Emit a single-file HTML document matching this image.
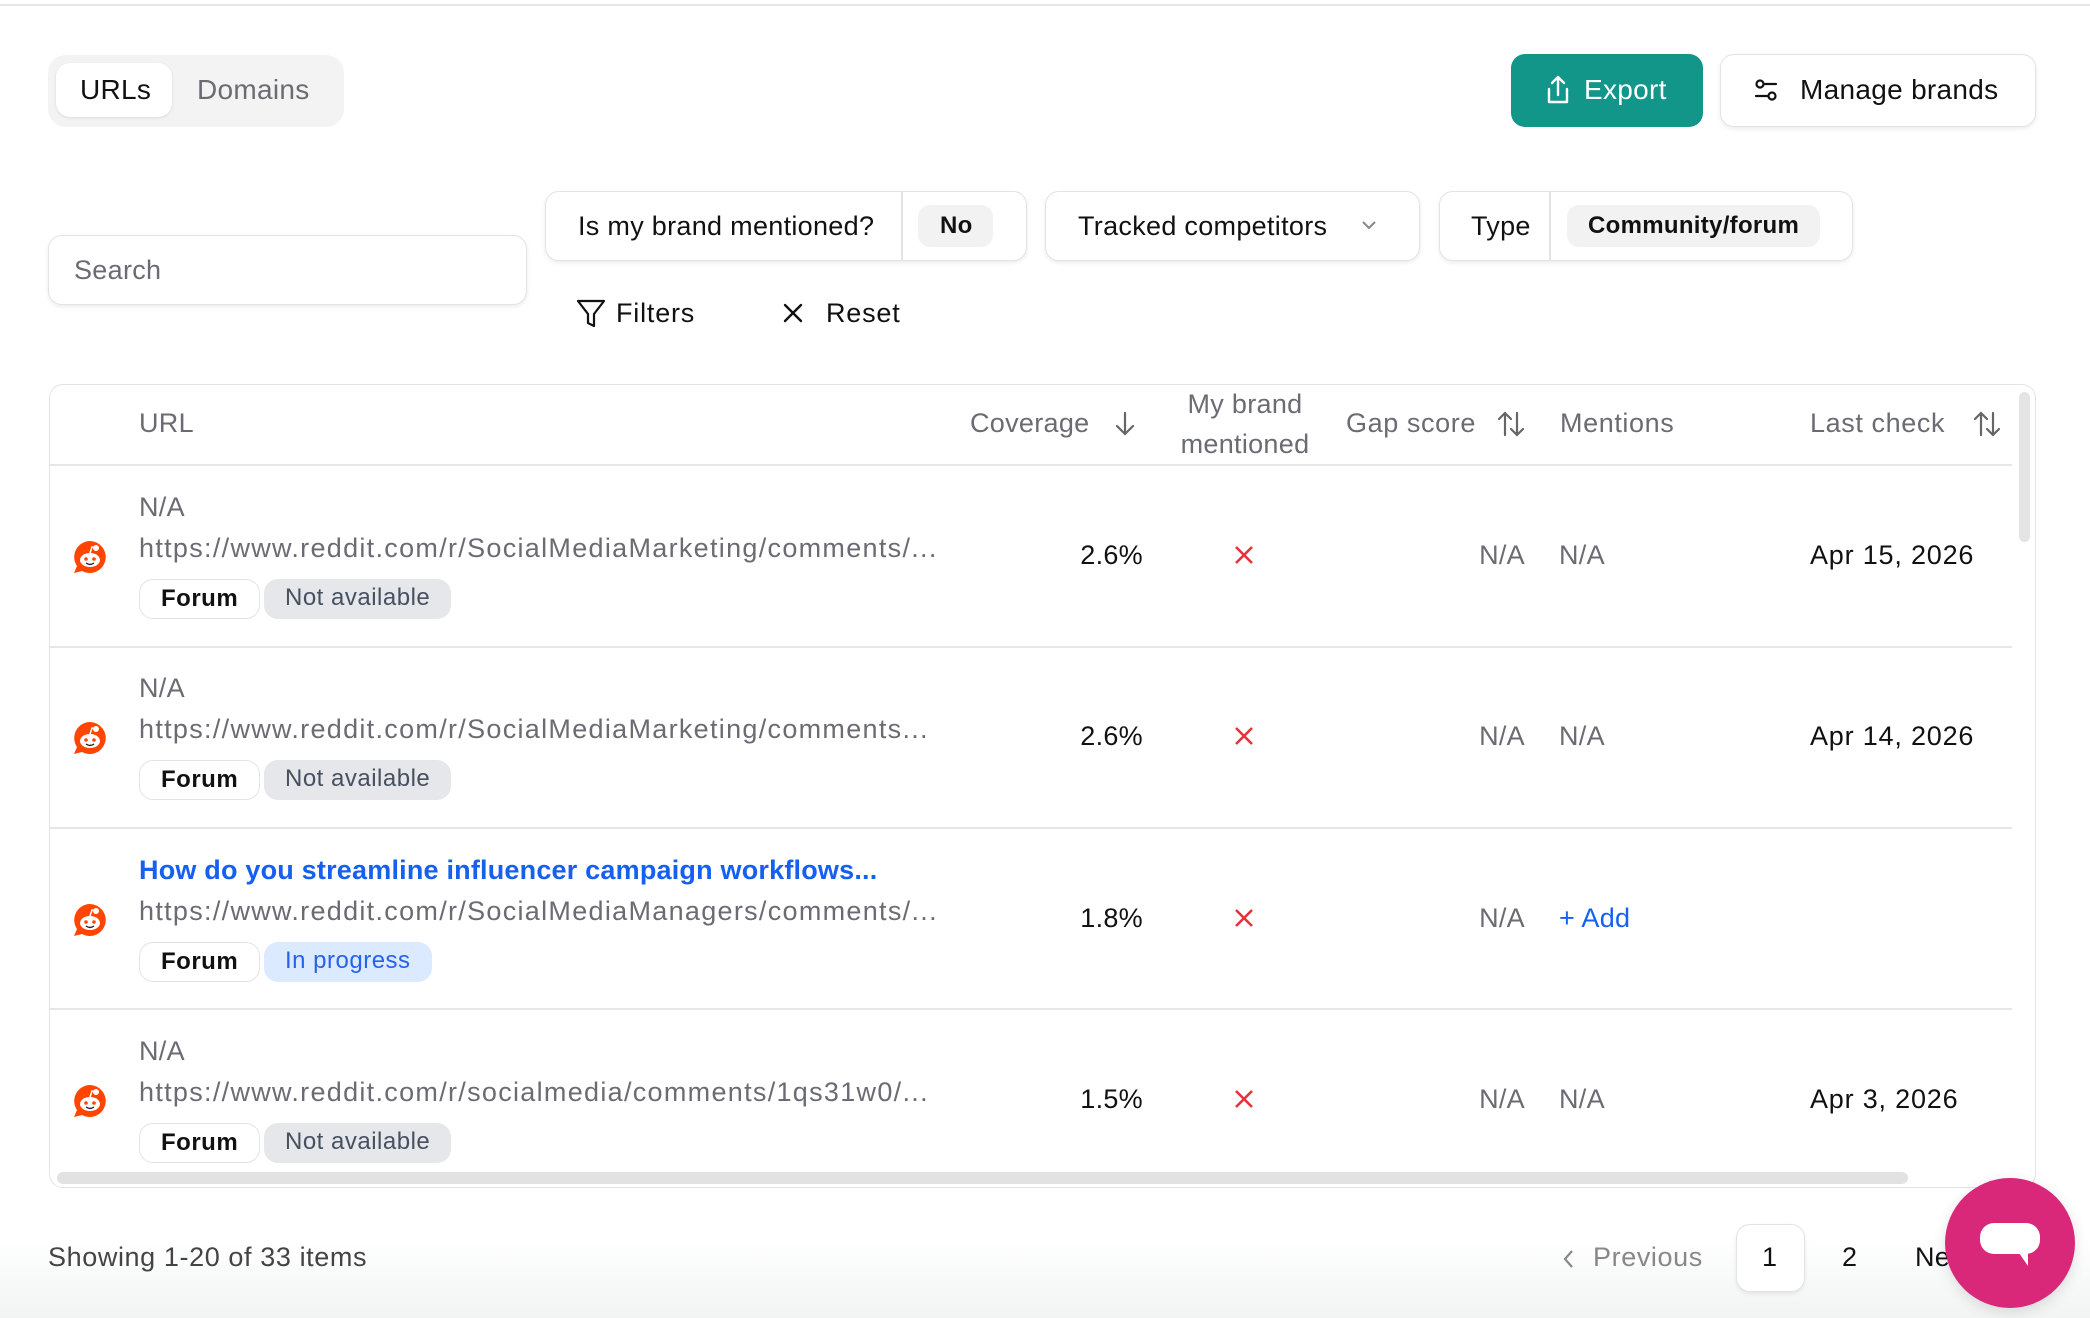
<!DOCTYPE html>
<html><head><meta charset="utf-8">
<style>
*{box-sizing:border-box;margin:0;padding:0}
body{width:2090px;height:1318px;background:#fff;font-family:"Liberation Sans",sans-serif;color:#111;position:relative;overflow:hidden}
.a{position:absolute}
.t{position:absolute;white-space:nowrap;line-height:1;letter-spacing:0.3px}
.btn{position:absolute;border:1.5px solid #e3e3e3;border-radius:14px;background:#fff;box-shadow:0 2px 4px rgba(0,0,0,.08)}
.tag{position:absolute;height:40px;border-radius:14px;font-size:24px;line-height:37px;padding:0 21px;white-space:nowrap;letter-spacing:0.5px}
.forum{border:1.5px solid #e3e3e3;background:#fff;color:#111;font-weight:bold}
.na{background:#e5e7eb;color:#475060}
.ip{background:#dbeafe;color:#2563eb}
.g{color:#6b6b73}
.x{color:#e8323c}
</style></head><body>
<div class="a" style="left:0;top:4px;width:2090px;height:2px;background:#e6e6e6"></div>

<div class="a" style="left:48px;top:55px;width:296px;height:72px;background:#f3f3f3;border-radius:18px"></div>
<div class="a" style="left:56px;top:63px;width:116px;height:54px;background:#fff;border-radius:14px;box-shadow:0 1px 3px rgba(0,0,0,.1)"></div>
<div class="t" style="left:80px;top:76px;font-size:28px;color:#111">URLs</div>
<div class="t" style="left:197px;top:76px;font-size:28px;color:#6b6b73">Domains</div>

<div class="a" style="left:1511px;top:54px;width:192px;height:73px;background:#12968a;border-radius:14px"></div>
<svg class="a" style="left:1544px;top:74px" width="28" height="32" viewBox="0 0 28 32" fill="none" stroke="#fff" stroke-width="2.4" stroke-linecap="round" stroke-linejoin="round"><path d="M14 3v18M8 9l6-6 6 6M5 15v13h18V15"/></svg>
<div class="t" style="left:1584px;top:76px;font-size:28px;color:#fff;font-weight:500">Export</div>
<div class="btn" style="left:1720px;top:54px;width:316px;height:73px"></div>
<svg class="a" style="left:1752px;top:76px" width="28" height="28" viewBox="0 0 28 28" fill="none" stroke="#111" stroke-width="2.2" stroke-linecap="round"><circle cx="8" cy="8" r="3.5"/><path d="M12 8h12M4 20h12"/><circle cx="20" cy="20" r="3.5"/></svg>
<div class="t" style="left:1800px;top:76px;font-size:28px">Manage brands</div>

<div class="btn" style="left:48px;top:235px;width:479px;height:70px"></div>
<div class="t" style="left:74px;top:257px;font-size:27px;color:#6b6b73">Search</div>

<div class="btn" style="left:545px;top:191px;width:482px;height:70px"></div>
<div class="t" style="left:578px;top:213px;font-size:27px">Is my brand mentioned?</div>
<div class="a" style="left:901px;top:192px;width:1.5px;height:68px;background:#e3e3e3"></div>
<div class="a" style="left:918px;top:205px;width:75px;height:42px;background:#f2f2f2;border-radius:12px"></div>
<div class="t" style="left:940px;top:214px;font-size:24px;font-weight:bold">No</div>

<div class="btn" style="left:1045px;top:191px;width:375px;height:70px"></div>
<div class="t" style="left:1078px;top:213px;font-size:27px">Tracked competitors</div>
<svg class="a" style="left:1360px;top:218px" width="18" height="14" viewBox="0 0 18 14" fill="none" stroke="#888" stroke-width="2"><path d="M3 4l6 6 6-6"/></svg>

<div class="btn" style="left:1439px;top:191px;width:414px;height:70px"></div>
<div class="t" style="left:1471px;top:213px;font-size:27px">Type</div>
<div class="a" style="left:1549px;top:192px;width:1.5px;height:68px;background:#e3e3e3"></div>
<div class="a" style="left:1567px;top:205px;width:253px;height:42px;background:#f2f2f2;border-radius:12px"></div>
<div class="t" style="left:1588px;top:214px;font-size:24px;font-weight:bold">Community/forum</div>

<svg class="a" style="left:576px;top:298px" width="30" height="32" viewBox="0 0 30 32" fill="none" stroke="#111" stroke-width="2.2" stroke-linejoin="round"><path d="M2 3h26L18 16v12l-6-3V16z"/></svg>
<div class="t" style="left:616px;top:300px;font-size:27px;letter-spacing:0.8px">Filters</div>
<svg class="a" style="left:782px;top:302px" width="22" height="22" viewBox="0 0 22 22" stroke="#111" stroke-width="2.4" stroke-linecap="round"><path d="M3 3l16 16M19 3L3 19"/></svg>
<div class="t" style="left:826px;top:300px;font-size:27px;letter-spacing:0.8px">Reset</div>

<div class="a" style="left:49px;top:384px;width:1987px;height:804px;border:1.5px solid #e3e3e3;border-radius:14px;overflow:hidden"></div>
<div class="a" style="left:50px;top:464px;width:1962px;height:2px;background:#e6e6e6"></div>
<div class="a" style="left:50px;top:646px;width:1962px;height:1.5px;background:#e6e6e6"></div>
<div class="a" style="left:50px;top:827px;width:1962px;height:1.5px;background:#e6e6e6"></div>
<div class="a" style="left:50px;top:1008px;width:1962px;height:1.5px;background:#e6e6e6"></div>
<div class="a" style="left:2019px;top:392px;width:11px;height:150px;background:#e4e4e4;border-radius:6px"></div>
<div class="a" style="left:57px;top:1172px;width:1851px;height:12px;background:#e2e2e2;border-radius:6px"></div>

<div class="t g" style="left:139px;top:410px;font-size:27px">URL</div>
<div class="t g" style="left:970px;top:410px;font-size:27px">Coverage</div>
<svg class="a" style="left:1114px;top:410px" width="22" height="28" viewBox="0 0 22 28" fill="none" stroke="#666" stroke-width="2.2" stroke-linecap="round"><path d="M11 3v21M3 16l8 8 8-8"/></svg>
<div class="t g" style="left:1170px;top:384px;font-size:27px;text-align:center;width:150px;line-height:40px;white-space:normal">My brand mentioned</div>
<div class="t g" style="left:1346px;top:410px;font-size:27px;letter-spacing:0.6px">Gap score</div>
<svg class="a" style="left:1496px;top:409px" width="30" height="30" viewBox="0 0 30 30" fill="none" stroke="#666" stroke-width="2.2" stroke-linecap="round"><path d="M9 26V4M3 10l6-6 6 6M21 4v22M15 20l6 6 6-6"/></svg>
<div class="t g" style="left:1560px;top:410px;font-size:27px;letter-spacing:0.6px">Mentions</div>
<div class="t g" style="left:1810px;top:410px;font-size:27px;letter-spacing:0.6px">Last check</div>
<svg class="a" style="left:1972px;top:409px" width="30" height="30" viewBox="0 0 30 30" fill="none" stroke="#666" stroke-width="2.2" stroke-linecap="round"><path d="M9 26V4M3 10l6-6 6 6M21 4v22M15 20l6 6 6-6"/></svg>

<div id="rows"></div>
<script>
var rows=[
{t:"N/A",u:"https://www.reddit.com/r/SocialMediaMarketing/comments/...",c:"2.6%",s:"na",m:"N/A",d:"Apr 15, 2026"},
{t:"N/A",u:"https://www.reddit.com/r/SocialMediaMarketing/comments...",c:"2.6%",s:"na",m:"N/A",d:"Apr 14, 2026"},
{t:"How do you streamline influencer campaign workflows...",u:"https://www.reddit.com/r/SocialMediaManagers/comments/...",c:"1.8%",s:"ip",m:"+ Add",d:""},
{t:"N/A",u:"https://www.reddit.com/r/socialmedia/comments/1qs31w0/...",c:"1.5%",s:"na",m:"N/A",d:"Apr 3, 2026"}];
var h="";
rows.forEach(function(r,i){var y=465+i*181.3;
var blue=r.t!="N/A";
h+='<svg class="a" style="left:72px;top:'+(y+74)+'px" width="36" height="36" viewBox="0 0 36 36"><path d="M18 2a16 16 0 1 1 -8 30L2 34l3-7A16 16 0 0 1 18 2z" fill="#ff4500"/><ellipse cx="18" cy="21" rx="10" ry="7" fill="#fff"/><circle cx="14" cy="20" r="1.8" fill="#ff4500"/><circle cx="22" cy="20" r="1.8" fill="#ff4500"/><path d="M14 24q4 3 8 0" stroke="#222" stroke-width="1.4" fill="none"/><circle cx="24" cy="9" r="3" fill="#fff"/><path d="M18 14l2-6 4 1" stroke="#fff" stroke-width="1.5" fill="none"/></svg>';
h+='<div class="t" style="left:139px;top:'+(y+29)+'px;font-size:27px;'+(blue?'color:#1560f0;font-weight:bold;letter-spacing:0.2px':'color:#6b6b73')+'">'+r.t+'</div>';
h+='<div class="t g" style="left:139px;top:'+(y+70)+'px;font-size:27px;letter-spacing:1.3px">'+r.u+'</div>';
h+='<div class="tag forum" style="left:139px;top:'+(y+114)+'px">Forum</div>';
h+='<div class="tag '+r.s+'" style="left:264px;top:'+(y+114)+'px">'+(r.s=="na"?"Not available":"In progress")+'</div>';
h+='<div class="t" style="left:1000px;width:143px;text-align:right;top:'+(y+77)+'px;font-size:27px">'+r.c+'</div>';
h+='<svg class="a" style="left:1234px;top:'+(y+80)+'px" width="20" height="20" viewBox="0 0 20 20" stroke="#e8323c" stroke-width="2.6"><path d="M2 2l16 16M18 2L2 18"/></svg>';
h+='<div class="t g" style="left:1400px;width:125px;text-align:right;top:'+(y+77)+'px;font-size:27px">N/A</div>';
h+='<div class="t" style="left:1559px;top:'+(y+77)+'px;font-size:27px;color:'+(r.m=="N/A"?"#6b6b73":"#1560f0")+'">'+r.m+'</div>';
h+='<div class="t" style="left:1810px;top:'+(y+77)+'px;font-size:27px;letter-spacing:0.8px">'+r.d+'</div>';
});
document.getElementById("rows").outerHTML=h;
</script>
<div class="a" style="left:0;top:1188px;width:2090px;height:130px;background:linear-gradient(#fff 40%,#f2f3f3)"></div>

<div class="t" style="left:48px;top:1244px;font-size:27px;color:#444;letter-spacing:0.6px">Showing 1-20 of 33 items</div>
<svg class="a" style="left:1560px;top:1247px" width="16" height="24" viewBox="0 0 16 24" fill="none" stroke="#888" stroke-width="2.2"><path d="M12 4l-7 8 7 8"/></svg>
<div class="t" style="left:1593px;top:1244px;font-size:27px;color:#888;letter-spacing:0.6px">Previous</div>
<div class="btn" style="left:1736px;top:1224px;width:69px;height:68px"></div>
<div class="t" style="left:1762px;top:1244px;font-size:27px">1</div>
<div class="t" style="left:1842px;top:1244px;font-size:27px">2</div>
<div class="t" style="left:1915px;top:1244px;font-size:27px">Ne</div>
<div class="a" style="left:1945px;top:1178px;width:130px;height:130px;border-radius:50%;background:#d9287a;box-shadow:0 4px 14px rgba(0,0,0,.12)"></div>
<div class="a" style="left:1980px;top:1223px;width:60px;height:31px;background:#fff;border-radius:14px"></div>
<svg class="a" style="left:2019px;top:1253px" width="12" height="14" viewBox="0 0 12 14"><path d="M0 0h9v13z" fill="#fff"/></svg>
</body></html>
